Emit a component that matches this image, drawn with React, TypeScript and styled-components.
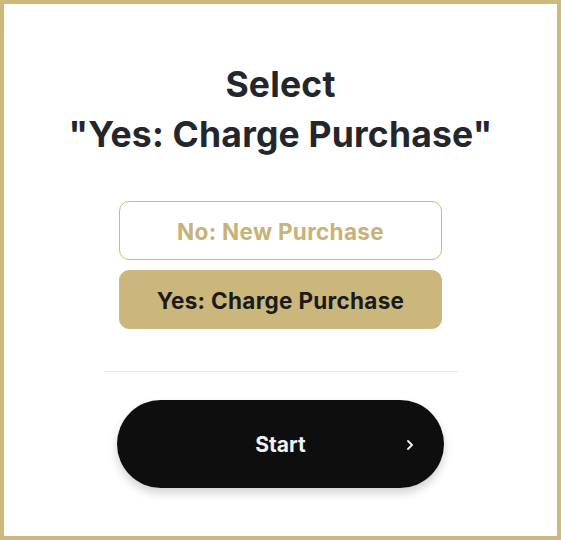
import React from "react";
import styled, { createGlobalStyle } from "styled-components";

const GlobalStyle = createGlobalStyle`
  html, body {
    margin: 0;
    padding: 0;
    background: #ffffff;
  }
  * {
    box-sizing: border-box;
  }
`;

const Frame = styled.div`
  width: 561px;
  height: 540px;
  border: 4px solid #cdb97e;
  background: #ffffff;
  display: flex;
  flex-direction: column;
  align-items: center;
  padding-top: 56px;
  font-family: Inter, "Noto Sans", sans-serif;
`;

const Title = styled.h1`
  margin: 0;
  font-size: 35.5px;
  line-height: 50px;
  font-weight: 700;
  color: #24262b;
  text-align: center;
  letter-spacing: 0.2px;
`;

const Options = styled.div`
  display: flex;
  flex-direction: column;
  gap: 10px;
  margin-top: 41px;
`;

const OptionButton = styled.button<{ selected?: boolean }>`
  width: 323px;
  height: 59px;
  border-radius: 10px;
  border: 1px solid #cdb97e;
  background: ${(p) => (p.selected ? "#cbb67b" : "#ffffff")};
  color: ${(p) => (p.selected ? "#1b1b1b" : "#c7b27a")};
  font-family: Inter, "Noto Sans", sans-serif;
  font-size: 22.5px;
  font-weight: 700;
  letter-spacing: 0.3px;
  padding: 2px 0 0;
  cursor: pointer;
`;

const Divider = styled.hr`
  width: 354px;
  margin: 42px 0 0;
  border: none;
  border-top: 1px solid #e6e6e6;
`;

const StartButton = styled.button`
  position: relative;
  margin-top: 28px;
  width: 327px;
  height: 88px;
  border-radius: 44px;
  border: none;
  background: #0e0e0e;
  color: #f2f2f2;
  font-family: Inter, "Noto Sans", sans-serif;
  font-size: 21px;
  font-weight: 700;
  box-shadow: 0 5px 10px rgba(0, 0, 0, 0.18);
  cursor: pointer;
  display: flex;
  align-items: center;
  justify-content: center;
`;

const Chevron = styled.svg`
  position: absolute;
  right: 31px;
  top: 50%;
  margin-top: -4px;
`;

export default function App() {
  return (
    <>
      <GlobalStyle />
      <Frame>
        <Title>
          Select
          <br />
          "Yes: Charge Purchase"
        </Title>
        <Options>
          <OptionButton>No: New Purchase</OptionButton>
          <OptionButton selected>Yes: Charge Purchase</OptionButton>
        </Options>
        <Divider />
        <StartButton>
          Start
          <Chevron width="6" height="10" viewBox="0 0 6 10">
            <path d="M1 1l4 4-4 4" fill="none" stroke="#f2f2f2" strokeWidth="1.8" strokeLinecap="round" strokeLinejoin="round" />
          </Chevron>
        </StartButton>
      </Frame>
    </>
  );
}
